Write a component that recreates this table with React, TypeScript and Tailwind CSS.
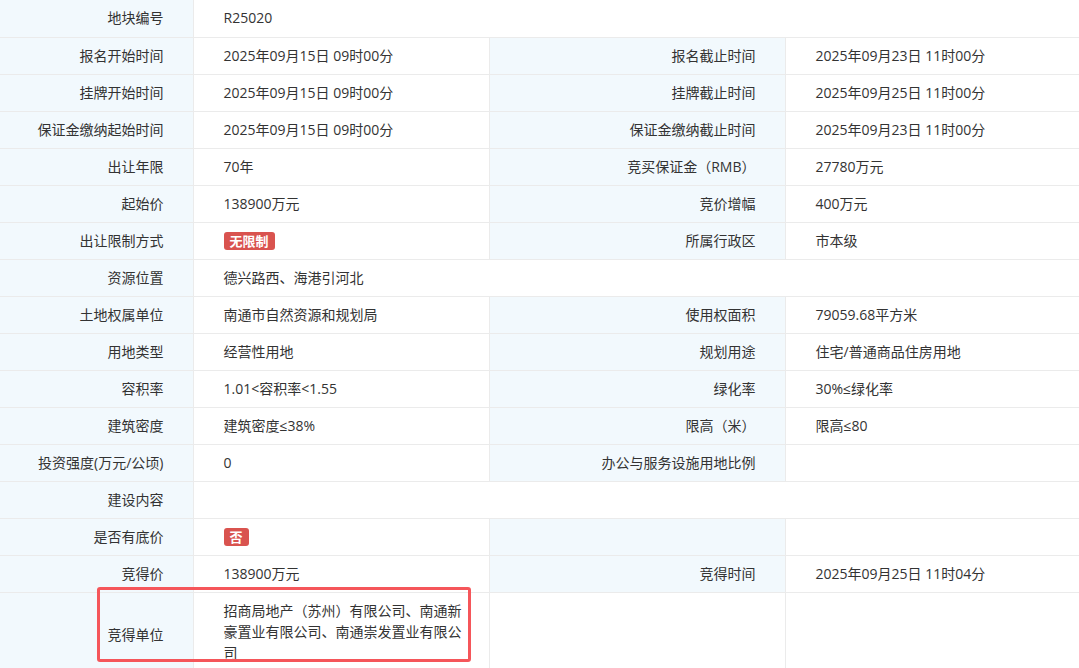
import type { ReactNode } from "react"

const font = { fontFamily: '"Open Sans","Noto Sans CJK SC",sans-serif' }

function Badge({ children }: { children: ReactNode }) {
  return (
    <span className="inline-block rounded-[3px] bg-[#d9534f] px-[6px] text-[13px] font-bold leading-[18px] text-white">
      {children}
    </span>
  )
}

function Label({ children, empty }: { children?: ReactNode; empty?: boolean }) {
  return (
    <td className={`border-r border-b border-[#ebebeb] pr-[29px] pb-[1px] text-right align-middle ${empty ? "bg-white" : "bg-[#f2f9fd]"}`}>
      {children}
    </td>
  )
}

function Value({ children, span }: { children?: ReactNode; span?: number }) {
  return (
    <td colSpan={span} className="border-r border-b border-[#ebebeb] pl-[30px] pr-[20px] pb-[1px] text-left align-middle">
      {children}
    </td>
  )
}

type Row = [string, ReactNode, string?, ReactNode?]

const rows: Row[] = [
  ["报名开始时间", "2025年09月15日 09时00分", "报名截止时间", "2025年09月23日 11时00分"],
  ["挂牌开始时间", "2025年09月15日 09时00分", "挂牌截止时间", "2025年09月25日 11时00分"],
  ["保证金缴纳起始时间", "2025年09月15日 09时00分", "保证金缴纳截止时间", "2025年09月23日 11时00分"],
  ["出让年限", "70年", "竞买保证金（RMB）", "27780万元"],
  ["起始价", "138900万元", "竞价增幅", "400万元"],
  ["出让限制方式", <Badge>无限制</Badge>, "所属行政区", "市本级"],
]

const rows2: Row[] = [
  ["土地权属单位", "南通市自然资源和规划局", "使用权面积", "79059.68平方米"],
  ["用地类型", "经营性用地", "规划用途", "住宅/普通商品住房用地"],
  ["容积率", "1.01<容积率<1.55", "绿化率", "30%≤绿化率"],
  ["建筑密度", "建筑密度≤38%", "限高（米）", "限高≤80"],
  ["投资强度(万元/公顷)", "0", "办公与服务设施用地比例", ""],
]

function Pair({ r }: { r: Row }) {
  return (
    <tr className="h-[37px]">
      <Label>{r[0]}</Label>
      <Value>{r[1]}</Value>
      <Label>{r[2]}</Label>
      <Value>{r[3]}</Value>
    </tr>
  )
}

export default function App() {
  return (
    <div className="relative h-[668px] w-[1079px] overflow-hidden bg-white text-[14px] text-[#333]" style={font}>
      <table className="w-[1079px] table-fixed border-collapse">
        <colgroup>
          <col className="w-[193px]" />
          <col className="w-[296px]" />
          <col className="w-[296px]" />
          <col className="w-[294px]" />
        </colgroup>
        <tbody>
          <tr className="h-[37px]">
            <Label>地块编号</Label>
            <Value span={3}>R25020</Value>
          </tr>
          {rows.map((r) => (
            <Pair key={r[0]} r={r} />
          ))}
          <tr className="h-[37px]">
            <Label>资源位置</Label>
            <Value span={3}>德兴路西、海港引河北</Value>
          </tr>
          {rows2.map((r) => (
            <Pair key={r[0]} r={r} />
          ))}
          <tr className="h-[37px]">
            <Label>建设内容</Label>
            <Value span={3} />
          </tr>
          <tr className="h-[37px]">
            <Label>是否有底价</Label>
            <Value>
              <Badge>否</Badge>
            </Value>
            <Label />
            <Value />
          </tr>
          <Pair r={["竞得价", "138900万元", "竞得时间", "2025年09月25日 11时04分"]} />
          <tr>
            <Label>竞得单位</Label>
            <td className="border-r border-b border-[#ebebeb] pt-[7px] pb-[14px] pl-[30px] pr-[20px] text-left align-top leading-[21px]">
              招商局地产（苏州）有限公司、南通新豪置业有限公司、南通崇发置业有限公司
            </td>
            <Label empty />
            <Value />
          </tr>
        </tbody>
      </table>
      <div className="absolute left-[97px] top-[587px] h-[75px] w-[374px] rounded-[3px] border-[3px] border-[#f5565a]" />
    </div>
  )
}
